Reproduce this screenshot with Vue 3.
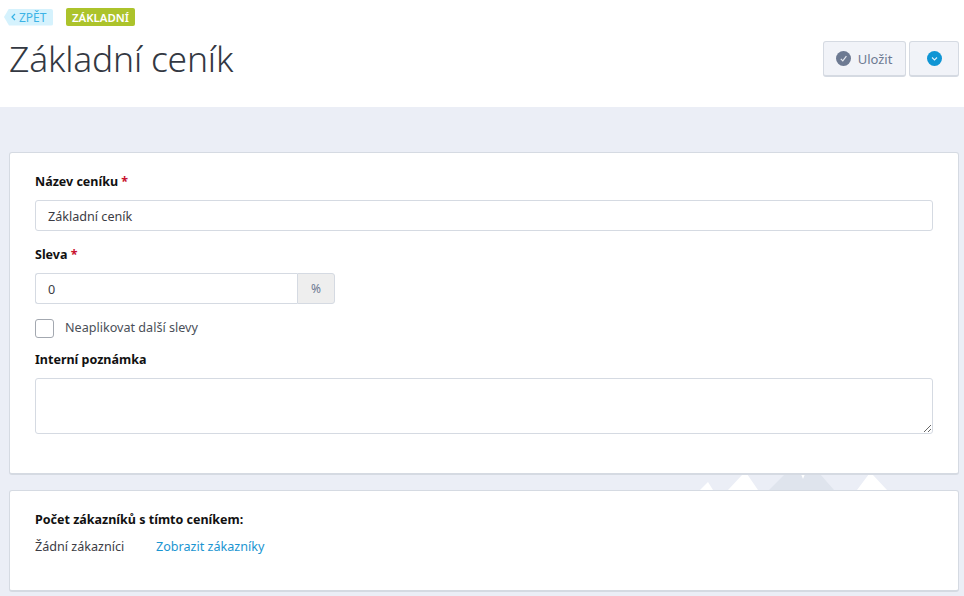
<script setup>
const title = 'Základní ceník'
</script>

<template>
  <div class="page">
    <header class="head">
      <div class="crumbs">
        <a class="back">
          <svg class="chev" width="5" height="8" viewBox="0 0 5 8"><path d="M4 1 1 4l3 3" fill="none" stroke="#35b2e6" stroke-width="1.2"/></svg>
          ZPĚT
        </a>
        <span class="badge">ZÁKLADNÍ</span>
      </div>
      <div class="title-row">
        <h1>{{ title }}</h1>
        <div class="actions">
          <button class="btn save">
            <svg width="15" height="15" viewBox="0 0 15 15"><circle cx="7.5" cy="7.5" r="7.5" fill="#6d7a92"/><path d="M4.8 7.8 6.8 9.8 10.4 5.2" fill="none" stroke="#e6e9ef" stroke-width="1.2"/></svg>
            <span>Uložit</span>
          </button>
          <button class="btn more">
            <svg width="15" height="15" viewBox="0 0 15 15"><circle cx="7.5" cy="7.5" r="7.5" fill="#0f95d4"/><path d="M5 6.5 7.5 9 10 6.5" fill="none" stroke="#dff1fa" stroke-width="1.1"/></svg>
          </button>
        </div>
      </div>
    </header>

    <main class="body">
      <svg class="mountains" width="200" height="16" viewBox="0 0 200 16">
        <path d="M1 16 9 8 14 16Z" fill="#fff"/>
        <path d="M29 16 44 0 48 0 59 16Z" fill="#fff"/>
        <path d="M70 16 86 0 121 0 135 16Z" fill="#dfe4ed"/>
        <path d="M102 0 104 5 106 0Z" fill="#fff"/>
        <path d="M158 16 170 0 173 0 188 16Z" fill="#fff"/>
      </svg>

      <section class="card form">
        <label class="label">Název ceníku <em>*</em></label>
        <input class="input wide" value="Základní ceník" />

        <label class="label second">Sleva <em>*</em></label>
        <div class="group">
          <input class="input joined" value="0" />
          <span class="addon">%</span>
        </div>

        <div class="check">
          <span class="box"></span>
          <span class="check-label">Neaplikovat další slevy</span>
        </div>

        <label class="label third">Interní poznámka</label>
        <textarea class="input area"></textarea>
      </section>

      <section class="card info">
        <div class="label">Počet zákazníků s tímto ceníkem:</div>
        <div class="info-row">
          <span class="none">Žádní zákazníci</span>
          <a class="link">Zobrazit zákazníky</a>
        </div>
      </section>
    </main>
  </div>
</template>

<style>
html, body { margin: 0; padding: 0; background: #ebeef6; overflow: hidden; }
</style>

<style scoped>
.page {
  width: 964px;
  height: 596px;
  overflow: hidden;
  background: #ebeef6;
  font-family: "Noto Sans", "Open Sans", sans-serif;
  font-size: 12.6px;
  color: #3c3c44;
}
.head {
  height: 107px;
  box-sizing: border-box;
  background: #fff;
  padding: 8px 5px 0 4px;
}
.crumbs { display: flex; align-items: center; height: 18px; gap: 13px; }
.back {
  display: flex;
  align-items: center;
  gap: 3px;
  width: 49px;
  height: 17px;
  box-sizing: border-box;
  padding-left: 7px;
  background: #d5f2fd;
  color: #3cb3e6;
  font-size: 12px;
  border-radius: 0 2px 2px 0;
  clip-path: polygon(5px 0, 100% 0, 100% 100%, 5px 100%, 0 50%);
}
.badge {
  display: flex;
  align-items: center;
  height: 18px;
  padding: 0 6px;
  background: #acc32b;
  color: #fff;
  font-size: 11.4px;
  font-weight: 600;
  border-radius: 2px;
}
.title-row { display: flex; justify-content: space-between; padding-left: 5px; }
h1 {
  margin: 5px 0 0;
  font-size: 35.4px;
  line-height: 54px;
  font-weight: 300;
  color: #333842;
  font-family: "Noto Sans", "Open Sans", sans-serif;
  letter-spacing: -0.2px;
}
.actions { display: flex; gap: 3px; margin-top: 15px; }
.btn {
  display: flex;
  align-items: center;
  justify-content: center;
  height: 36px;
  box-sizing: border-box;
  background: #f1f3f8;
  border: 1px solid #d5dae2;
  border-bottom-width: 2px;
  border-radius: 3px;
  padding: 0;
  font: inherit;
  color: #6d7a92;
  font-size: 13px;
}
.save { width: 83px; gap: 7px; padding-right: 1px; }
.more { width: 50px; }
.body {
  position: relative;
  padding: 45px 5px 0 9px;
  display: flex;
  flex-direction: column;
  gap: 15px;
}
.mountains { position: absolute; left: 699px; top: 367px; }
.card {
  position: relative;
  background: #fff;
  border: 1px solid #d5dae2;
  border-bottom-width: 2px;
  border-radius: 3px;
  box-sizing: border-box;
}
.form { height: 323px; padding: 19px 25px 0; }
.info { height: 102px; padding: 19px 25px 0; }
.label {
  display: block;
  font-weight: 700;
  color: #111;
  line-height: 20px;
  font-size: 12.5px;
}
.label em { color: #c8102e; font-style: normal; }
.input {
  display: block;
  box-sizing: border-box;
  background: #fff;
  border: 1px solid #d5dae2;
  border-radius: 3px;
  font: inherit;
  color: #3c3c44;
  padding: 1px 12px 0;
  outline: none;
  margin: 0;
}
.wide { width: 898px; height: 31px; margin-top: 8px; }
.second { margin-top: 14px; }
.group { display: flex; width: 300px; height: 31px; margin-top: 8px; }
.joined { flex: 1; min-width: 0; height: 31px; border-radius: 3px 0 0 3px; border-right: 0; }
.addon {
  width: 38px;
  display: flex;
  align-items: center;
  justify-content: center;
  box-sizing: border-box;
  background: #eeeeee;
  border: 1px solid #d5dae2;
  border-radius: 0 3px 3px 0;
  color: #6d7a92;
  font-size: 12px;
}
.check { display: flex; align-items: center; margin-top: 15px; height: 19px; gap: 11px; }
.box {
  width: 19px;
  height: 19px;
  box-sizing: border-box;
  border: 1px solid #a3a8b0;
  border-radius: 3px;
  background: #fff;
}
.check-label { color: #4a4f58; position: relative; top: -1px; }
.third { margin-top: 12px; }
.area { width: 898px; height: 56px; margin-top: 8px; resize: both; }
.info-row { display: flex; margin-top: 7px; line-height: 20px; }
.none { width: 121px; }
.link { color: #1a95d1; }
</style>
